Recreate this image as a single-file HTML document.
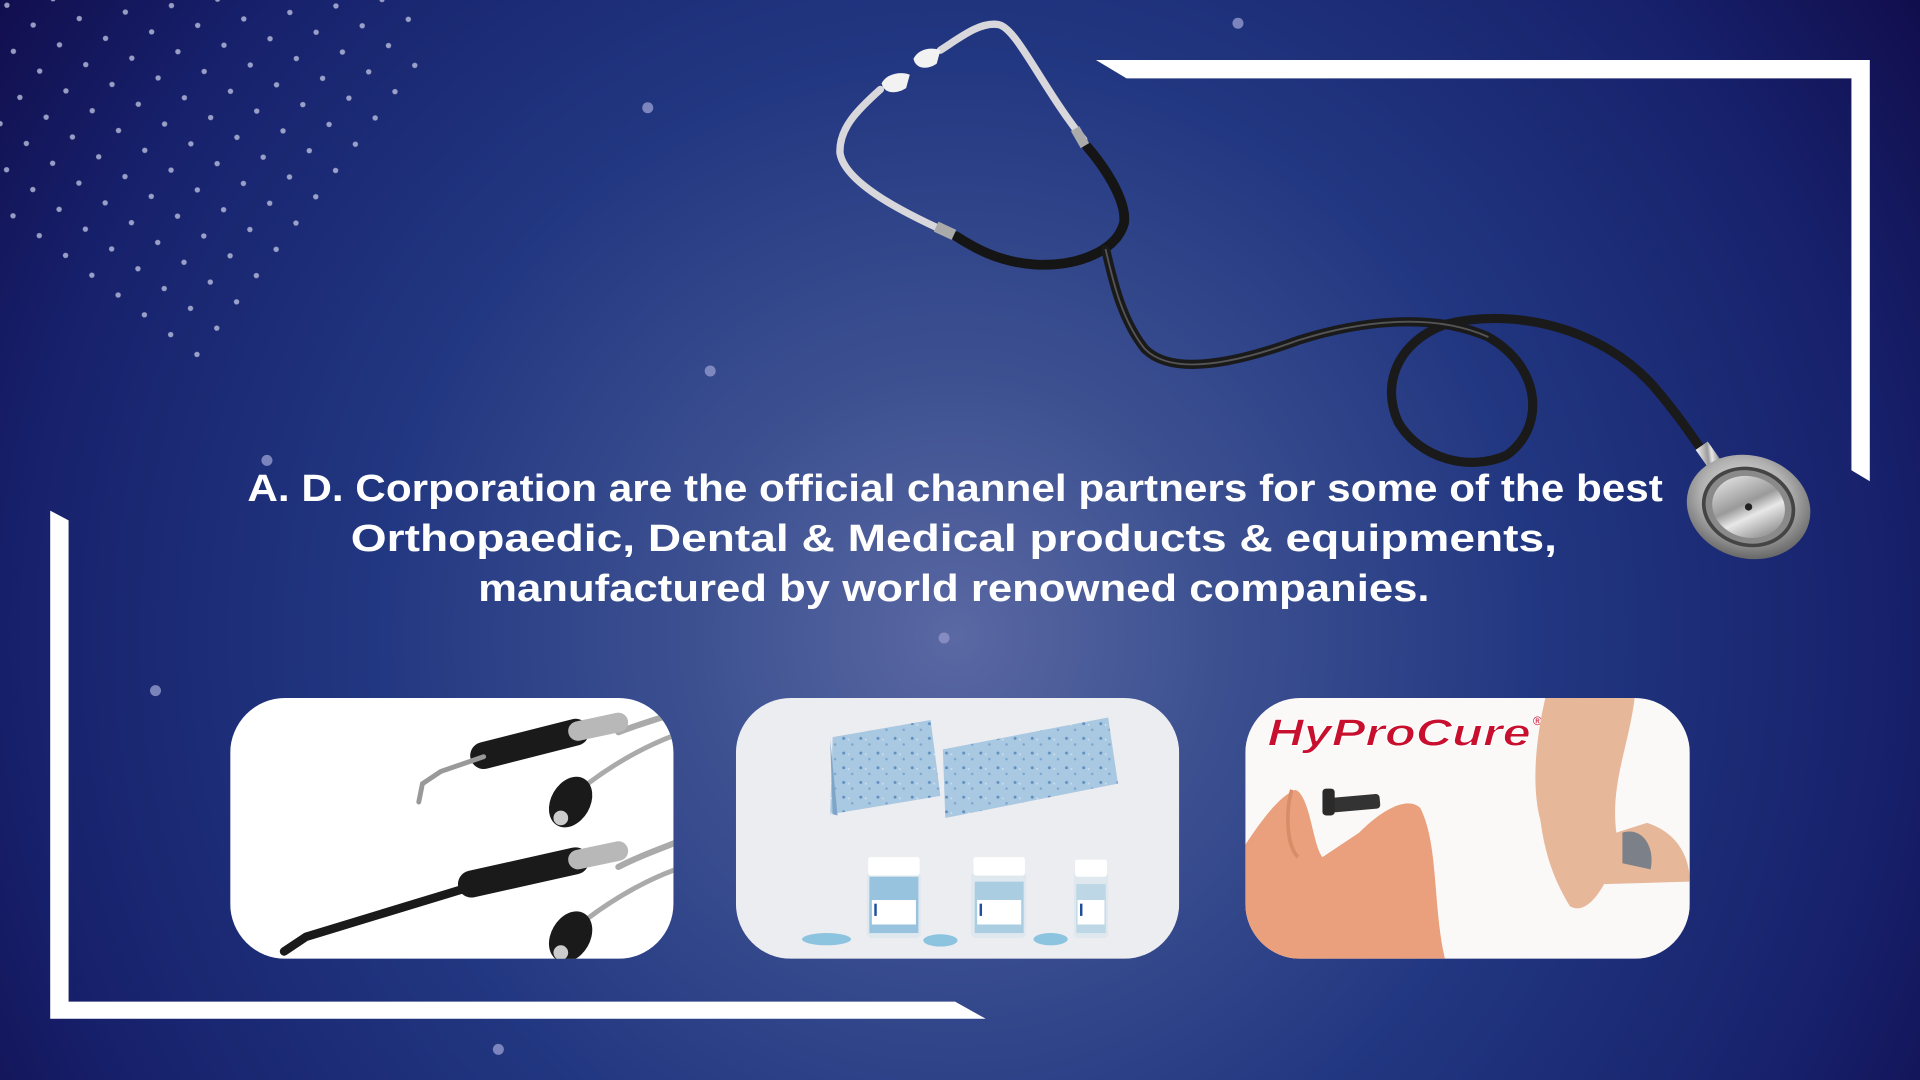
<!DOCTYPE html>
<html><head><meta charset="utf-8"><style>
html,body{margin:0;padding:0;width:1920px;height:1080px;overflow:hidden;background:#1a2470}
svg{display:block}
</style></head><body>
<svg width="1920" height="1080" viewBox="0 0 1568 882" xmlns="http://www.w3.org/2000/svg">
<defs>
<radialGradient id="bg" cx="780" cy="520" r="950" gradientUnits="userSpaceOnUse">
<stop offset="0" stop-color="#5a68a3"/>
<stop offset="0.22" stop-color="#3d5191"/>
<stop offset="0.5" stop-color="#223781"/>
<stop offset="0.8" stop-color="#17216c"/>
<stop offset="1" stop-color="#110d4c"/>
</radialGradient>
<pattern id="dots" width="38" height="38" patternUnits="userSpaceOnUse" patternTransform="rotate(-8)">
<circle cx="5" cy="5" r="2.2" fill="#c4c9e6"/><circle cx="24" cy="24" r="2.2" fill="#c4c9e6"/>
</pattern>
<clipPath id="dclip"><polygon points="0,0 345,0 345,60 165,300 0,190"/></clipPath>
<linearGradient id="silver" x1="0" y1="0" x2="1" y2="1">
<stop offset="0" stop-color="#f4f4f4"/><stop offset="0.45" stop-color="#9a9a9a"/><stop offset="0.6" stop-color="#e8e8e8"/><stop offset="1" stop-color="#6a6a6a"/>
</linearGradient>
<radialGradient id="disc" cx="0.45" cy="0.4" r="0.6">
<stop offset="0" stop-color="#eeeeee"/><stop offset="0.6" stop-color="#b0b0b0"/><stop offset="1" stop-color="#6a6a6a"/>
</radialGradient>
<pattern id="spk" width="14" height="12" patternUnits="userSpaceOnUse">
<rect width="14" height="12" fill="#a9c8e1"/><circle cx="3" cy="3" r="1.2" fill="#5e8fbf"/><circle cx="10" cy="8" r="1" fill="#7aa5cf"/><circle cx="7" cy="4" r="0.8" fill="#cfe0ee"/>
</pattern>
<clipPath id="c1"><rect x="188" y="570" width="362" height="213" rx="45"/></clipPath>
<clipPath id="c2"><rect x="601" y="570" width="362" height="213" rx="45"/></clipPath>
<clipPath id="c3"><rect x="1017" y="570" width="363" height="213" rx="45"/></clipPath>
</defs>
<rect width="1568" height="882" fill="url(#bg)"/>
<rect width="360" height="310" fill="url(#dots)" clip-path="url(#dclip)" opacity="0.75"/>
<g fill="#8c93c8" opacity="0.85">
<circle cx="529" cy="88" r="4.5"/><circle cx="1011" cy="19" r="4.5"/><circle cx="580" cy="303" r="4.5"/>
<circle cx="218" cy="376" r="4.5"/><circle cx="771" cy="521" r="4.5"/><circle cx="127" cy="564" r="4.5"/><circle cx="407" cy="857" r="4.5"/>
</g>
<polygon points="895,49 1527,49 1527,393 1512,384 1512,64 920,64" fill="#fff"/>
<polygon points="41,417 56,425 56,818 780,818 805,832 41,832" fill="#fff"/>
<g fill="none" stroke-linecap="round">
<path d="M768,41 C785,30 800,18 815,20 C830,22 850,70 885,114" stroke="#d8d8dc" stroke-width="6"/>
<path d="M719,73 C700,90 685,105 686,125 C690,150 740,175 781,193" stroke="#d8d8dc" stroke-width="6"/>
<path d="M888,120 C905,140 920,165 918,182 C912,205 880,218 845,216 C815,214 795,202 781,193" stroke="#151515" stroke-width="8"/>
<path d="M903,204 C908,225 915,260 935,285 C955,305 1000,300 1060,278 C1110,262 1170,255 1215,275 C1260,300 1262,350 1230,372 C1200,385 1160,375 1142,345 C1128,315 1140,280 1180,265 C1240,250 1310,270 1350,315 C1370,338 1385,360 1398,380" stroke="#1a1a1a" stroke-width="7.5"/>
<path d="M903,204 C908,225 915,260 935,285 C955,305 1000,300 1060,278 C1110,262 1170,255 1215,275" stroke="#555" stroke-width="1.5"/>
</g>
<rect x="878" y="104" width="8" height="16" fill="#aaa" transform="rotate(-30 882 112)"/>
<rect x="764" y="184" width="16" height="9" fill="#aaa" transform="rotate(25 772 188)"/>
<path d="M746,48 C750,40 760,38 768,41 L765,52 C758,57 748,57 746,48 Z" fill="#f2f2f2"/>
<path d="M720,68 C724,60 736,58 743,61 L740,72 C732,77 722,77 720,68 Z" fill="#f2f2f2"/>
<rect x="1390" y="362" width="12" height="22" fill="url(#silver)" transform="rotate(-35 1396 373)"/>
<ellipse cx="1428" cy="414" rx="51" ry="42" fill="url(#disc)" transform="rotate(15 1428 414)"/>
<ellipse cx="1428" cy="414" rx="37" ry="31" fill="#8a8a8a" stroke="#444" stroke-width="3" transform="rotate(15 1428 414)"/>
<ellipse cx="1428" cy="414" rx="30" ry="25" fill="url(#silver)" transform="rotate(15 1428 414)"/>
<circle cx="1428" cy="414" r="3" fill="#222"/>
<g font-family="'Liberation Sans',sans-serif" font-weight="bold" font-size="31" fill="#fff" text-anchor="middle">
<text x="780" y="409" textLength="1156" lengthAdjust="spacingAndGlyphs">A. D. Corporation are the official channel  partners for some of the best</text>
<text x="779" y="450" textLength="985" lengthAdjust="spacingAndGlyphs">Orthopaedic, Dental &amp; Medical products &amp; equipments,</text>
<text x="779" y="491" textLength="777" lengthAdjust="spacingAndGlyphs">manufactured by world renowned companies.</text>
</g>
<g clip-path="url(#c1)">
<rect x="188" y="570" width="362" height="213" fill="#fff"/>
<g stroke-linecap="round" fill="none">
<path d="M505,598 C520,592 535,588 552,582" stroke="#aaa" stroke-width="5"/>
<path d="M480,640 C500,625 525,610 552,600" stroke="#aaa" stroke-width="4"/>
<path d="M395,617 L470,598" stroke="#1a1a1a" stroke-width="22"/>
<path d="M472,597 L505,590" stroke="#b8b8b8" stroke-width="16"/>
<path d="M395,618 L360,630 L345,640 L342,655" stroke="#999" stroke-width="4"/>
<path d="M505,708 C520,700 535,695 552,688" stroke="#aaa" stroke-width="5"/>
<path d="M480,750 C500,735 525,720 552,710" stroke="#aaa" stroke-width="4"/>
<path d="M385,722 L470,703" stroke="#1a1a1a" stroke-width="22"/>
<path d="M472,702 L505,695" stroke="#b8b8b8" stroke-width="16"/>
<path d="M385,724 L250,765 L232,777" stroke="#1a1a1a" stroke-width="7"/>
</g>
<ellipse cx="466" cy="655" rx="16" ry="22" fill="#1a1a1a" transform="rotate(30 466 655)"/>
<ellipse cx="466" cy="765" rx="16" ry="22" fill="#1a1a1a" transform="rotate(30 466 765)"/>
<circle cx="458" cy="668" r="6" fill="#ccc"/><circle cx="458" cy="778" r="6" fill="#ccc"/>
</g>
<g clip-path="url(#c2)">
<rect x="601" y="570" width="362" height="213" fill="#ecedf1"/>
<polygon points="680,602 760,588 768,650 678,665" fill="url(#spk)"/>
<polygon points="678,604 684,666 680,665" fill="#7fa6c8"/>
<polygon points="770,612 905,586 913,640 772,668" fill="url(#spk)"/>
<g fill="#dfe8ee"><rect x="708" y="712" width="44" height="54" rx="4"/><rect x="793" y="712" width="45" height="54" rx="4"/><rect x="877" y="712" width="28" height="54" rx="3"/></g>
<g fill="#fff"><rect x="709" y="700" width="42" height="15" rx="2"/><rect x="795" y="700" width="42" height="15" rx="2"/><rect x="878" y="702" width="26" height="14" rx="2"/></g>
<g fill="#7fb7d8"><rect x="710" y="716" width="40" height="46" opacity="0.75"/><rect x="796" y="720" width="40" height="42" opacity="0.55"/><rect x="879" y="722" width="24" height="40" opacity="0.35"/></g>
<g fill="#fff"><rect x="712" y="735" width="36" height="20"/><rect x="798" y="735" width="36" height="20"/><rect x="880" y="735" width="22" height="20"/></g>
<g fill="#1f4e9a"><rect x="714" y="738" width="2" height="10"/><rect x="800" y="738" width="2" height="10"/><rect x="882" y="738" width="2" height="10"/></g>
<g fill="#8cc4e0"><ellipse cx="675" cy="767" rx="20" ry="5"/><ellipse cx="768" cy="768" rx="14" ry="5"/><ellipse cx="858" cy="767" rx="14" ry="5"/></g>
</g>
<g clip-path="url(#c3)">
<rect x="1017" y="570" width="363" height="213" fill="#fbf9f8"/>
<text x="1035" y="609" font-family="'Liberation Sans',sans-serif" font-weight="bold" font-style="italic" font-size="31" fill="#c8102e" stroke="#fff" stroke-width="0.8" textLength="215" lengthAdjust="spacingAndGlyphs">HyProCure</text>
<text x="1252" y="592" font-family="'Liberation Sans',sans-serif" font-size="10" fill="#c8102e">®</text>
<path d="M1262,570 L1335,570 C1330,610 1315,640 1320,680 L1345,672 C1370,680 1380,700 1380,720 L1310,722 C1300,740 1290,745 1282,740 C1270,720 1262,700 1258,670 C1250,640 1255,600 1262,570 Z" fill="#e7b79a"/>
<path d="M1325,680 C1340,675 1352,690 1348,710 L1325,705 Z" fill="#7c8088"/>
<path d="M1017,690 C1030,670 1045,650 1058,645 C1070,650 1072,690 1080,700 L1110,680 C1130,660 1150,650 1160,660 C1175,690 1170,740 1180,783 L1017,783 Z" fill="#eaa07c"/>
<path d="M1055,645 C1050,660 1050,690 1060,700" stroke="#d88d68" stroke-width="3" fill="none"/>
<rect x="1085" y="650" width="42" height="12" rx="3" fill="#333" transform="rotate(-5 1106 656)"/>
<rect x="1080" y="644" width="10" height="22" rx="3" fill="#2a2a2a"/>
</g>
</svg>
</body></html>
